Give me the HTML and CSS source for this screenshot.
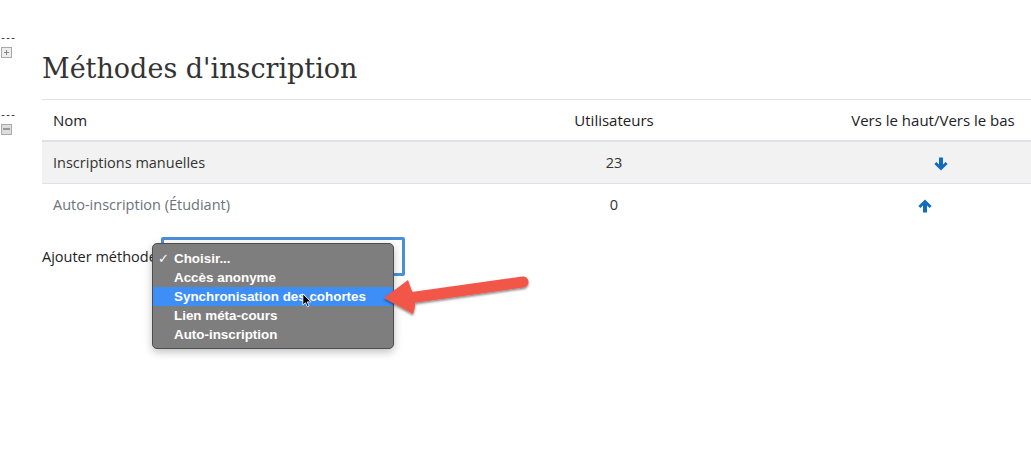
FILE: index.html
```html
<!DOCTYPE html>
<html lang="fr">
<head>
    <meta charset="UTF-8">
    <title>Méthodes d'inscription</title>
    <link rel="stylesheet" href="styles.css">
</head>
<body>
    <div class="page">
        <div class="gutter">
            <div class="toggle first">
                <span class="dashes">---</span>
                <span class="box plus"></span>
            </div>
            <div class="toggle">
                <span class="dashes">---</span>
                <span class="box minus"></span>
            </div>
        </div>
        <div class="main">
            <h2>Méthodes d'inscription</h2>
            <table class="methods">
                <colgroup>
                    <col class="w-name">
                    <col class="w-users">
                    <col class="w-move">
                </colgroup>
                <tr>
                    <th>Nom</th>
                    <th class="center">Utilisateurs</th>
                    <th class="center">Vers le haut/Vers le bas</th>
                </tr>
                <tr class="odd">
                    <td>Inscriptions manuelles</td>
                    <td class="center">23</td>
                    <td class="center"><span class="spacer"></span><svg class="move" viewBox="0 0 16 16"><path d="M6 1.5h4v7l2.6-2.6 2 2L8 14.5 1.4 7.9l2-2L6 8.5z"/></svg></td>
                </tr>
                <tr>
                    <td class="dimmed">Auto-inscription (Étudiant)</td>
                    <td class="center">0</td>
                    <td class="center"><svg class="move" viewBox="0 0 16 16"><path d="M6 14.5h4v-7l2.6 2.6 2-2L8 1.5 1.4 8.1l2 2L6 7.5z"/></svg><span class="spacer"></span></td>
                </tr>
            </table>
            <div class="add-row">
                <label>Ajouter méthode</label>
                <div class="select-wrap">
                    <div class="select-box"></div>
                    <ul class="popup">
                        <li><span class="check">✓</span>Choisir...</li>
                        <li>Accès anonyme</li>
                        <li class="hover">Synchronisation des cohortes</li>
                        <li>Lien méta-cours</li>
                        <li>Auto-inscription</li>
                    </ul>
                    <svg class="cursor" viewBox="0 0 12 18"><path d="M1 1v13.5l3.2-3 2.2 5 2-0.9-2.1-4.9h4.4z" fill="#000" stroke="#fff" stroke-width="1"/></svg>
                </div>
            </div>
        </div>
    </div>
    <svg class="callout" viewBox="0 0 165 50">
        <defs>
            <filter id="shade" x="-10%" y="-30%" width="120%" height="160%">
                <feDropShadow dx="0" dy="1.5" stdDeviation="1.3" flood-color="#000" flood-opacity="0.5"/>
            </filter>
        </defs>
        <g filter="url(#shade)" fill="#f2574a">
            <line x1="34" y1="28" x2="148" y2="12" stroke="#f2574a" stroke-width="11" stroke-linecap="round"/>
            <path d="M9 28 L33 10 Q36 20 40 27 Q41 36 38 44 Z"/>
        </g>
    </svg>
</body>
</html>
```

FILE: styles.css
```css
html {
    overflow: hidden;
}
body {
    margin: 0;
    min-height: 475px;
    font-family: 'Open Sans', sans-serif;
    font-size: 14.5px;
    color: #1d2125;
    background-color: #fff;
}
.page {
    display: flex;
}
.gutter {
    width: 42px;
    flex-shrink: 0;
}
.toggle {
    display: flex;
    flex-direction: column;
    margin-top: 50px;
}
.toggle.first {
    margin-top: 31px;
}
.dashes {
    font-family: 'DejaVu Sans Mono', monospace;
    font-size: 10px;
    line-height: 14px;
    letter-spacing: -1px;
    color: #222;
}
.box {
    width: 9px;
    height: 9px;
    margin-left: 1px;
    margin-top: 2px;
    border: 1px solid #aaa;
    background: #eee;
    position: relative;
}
.box::before {
    content: '';
    position: absolute;
    left: 2px;
    top: 4px;
    width: 5px;
    height: 1px;
    background: #888;
}
.plus::after {
    content: '';
    position: absolute;
    left: 4px;
    top: 2px;
    width: 1px;
    height: 5px;
    background: #888;
}
.minus {
    background: #ddd;
}
.minus::before {
    top: 3px;
    height: 2px;
    left: 1px;
    width: 7px;
    background: #999;
}
.main {
    width: 1000px;
    flex-shrink: 0;
}
h2 {
    font-family: 'DejaVu Serif', serif;
    font-weight: normal;
    font-size: 27px;
    line-height: 36px;
    color: #333;
    margin: 51px 0 12px;
}
.methods {
    width: 1000px;
    table-layout: fixed;
    border-collapse: collapse;
}
.w-name {
    width: 362px;
}
.w-users {
    width: 420px;
}
.w-move {
    width: 218px;
}
.methods th, .methods td {
    padding: 0 11px;
    height: 41px;
    border-top: 1px solid #dee2e6;
    text-align: left;
    font-weight: normal;
    color: #333;
    white-space: nowrap;
}
.methods th {
    font-size: 15px;
    color: #1d2125;
    border-bottom: 2px solid #dee2e6;
    height: 40px;
}
.methods .center {
    text-align: center;
}
.odd td {
    background-color: #f2f2f2;
}
.methods .dimmed {
    color: #6a737b;
}
.move {
    width: 16px;
    height: 16px;
    fill: #0f6cbf;
    vertical-align: middle;
}
.spacer {
    display: inline-block;
    width: 16px;
}
.add-row {
    display: flex;
    align-items: center;
    margin-top: 12px;
}
.add-row label {
    width: 119px;
    flex-shrink: 0;
    white-space: nowrap;
    color: #1d2125;
}
.select-wrap {
    position: relative;
    width: 244px;
    height: 39px;
}
.select-box {
    height: 33px;
    border: 3px solid #4a90d9;
    border-radius: 2px;
}
.popup {
    position: absolute;
    left: -9px;
    top: 6px;
    width: 240px;
    margin: 0;
    padding: 5px 0 4px;
    list-style: none;
    background: #7e7e7e;
    border: 1px solid #4d4d4d;
    border-radius: 5px;
    box-shadow: 0 3px 8px rgba(0, 0, 0, 0.25);
    font-family: 'Liberation Sans', Arial, sans-serif;
    font-weight: bold;
    font-size: 13.4px;
    color: #fff;
}
.popup li {
    height: 19px;
    line-height: 19px;
    padding-left: 21px;
    position: relative;
}
.popup li.hover {
    background: #3d8ef7;
}
.check {
    position: absolute;
    left: 5px;
    font-weight: normal;
}
.cursor {
    position: absolute;
    left: 141px;
    top: 56px;
    width: 10px;
    height: 15px;
}
.callout {
    position: absolute;
    left: 375px;
    top: 270px;
    width: 165px;
    height: 50px;
}
```
